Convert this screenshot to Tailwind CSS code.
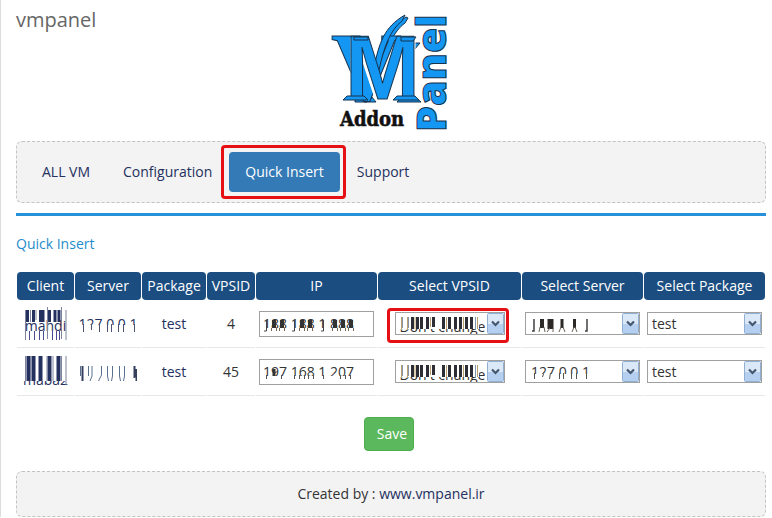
<!DOCTYPE html>
<html lang="en">
<head>
    <meta charset="UTF-8">
    <meta name="viewport" content="width=device-width, initial-scale=1.0">
    <title>vmpanel</title>
    <script src="https://cdn.jsdelivr.net/npm/@tailwindcss/browser@4"></script>
</head>
<body class="bg-white font-['Open_Sans',sans-serif] text-sm text-[#333333]">
    <!-- Shared shapes: drop-down arrow and the masks over private values -->
    <svg class="hidden">
        <defs>
            <linearGradient id="arrowFill" x1="0" y1="0" x2="0" y2="1">
                <stop offset="0" stop-color="#e6f0fb"/>
                <stop offset="1" stop-color="#a9c9ee"/>
            </linearGradient>
        </defs>
        <symbol id="arrow" viewBox="0 0 17 21">
            <rect x=".5" y=".5" width="16" height="20" rx="1" fill="#dbe8f8" stroke="#8fb0d3"/>
            <path d="M1 11h15v9H1z" fill="#b5cff0"/>
            <path d="M5 8.500l3.500 3.500 3.500-3.500" fill="none" stroke="#43566e" stroke-width="2.200"/>
        </symbol>
        <symbol id="maskVps" viewBox="0 0 110 23">
            <path d="M3 2h81v15H3z" fill="#fff"/>
            <path d="M6.500 5v13M12.500 5v13" stroke="#b9a06c"/>
            <path d="M7.500 5v11M13.500 5v11M80.500 5v13" stroke="#8395ac"/>
            <path d="M17.500 5v12M22.500 5v12M26.500 5v12M32.500 5v12M38.500 5v10M48.500 5v12M54.500 5v12M60.500 5v12M65.500 5v12M71.500 5v12M76.500 5v12" stroke="#2d2e35" stroke-width="3"/>
            <path d="M20 5v12M35.500 5v10M51.500 5v12M68.500 5v12M82.500 5v12" stroke="#b9a06c"/>
        </symbol>
    </svg>

    <div class="border-l border-[#dddddd] pl-[15px] pr-1.5">
        <header class="grid grid-cols-[1fr_auto_1fr] h-[141px]">
            <h1 class="text-xl leading-10 text-[#666666]">vmpanel</h1>
            <svg class="w-[120px] h-[141px]" viewBox="0 0 120 141" role="img" aria-label="VM Addon Panel">
                <g fill="#1496f3" stroke="#16324c" stroke-width="1">
                    <!-- drop shadows of the monogram -->
                    <path d="M47 66C53 43 57 29 75 17l2 1-3 5C62 32 57 46 51 70zM15 44l21 58h-3zM83 43h6l-6 7v46l7 6H66l4-4h9zM24 102h21l-5-6v3H24z"/>
                    <text x="0" y="100" font-family="Liberation Serif, serif" font-weight="bold" font-size="98">V</text>
                    <path d="M43 68C48 43 53 27 74 15l-3 6C59 30 53 47 48 70z"/>
                    <g font-family="Liberation Sans, sans-serif" font-weight="bold" font-size="90" stroke-linejoin="round">
                        <path d="M22 38v60M34 62l12 36 14-36M82 38v60" fill="none" stroke="#fff" stroke-width="5"/>
                        <text x="14" y="99">M</text>
                        <path d="M16 96l-4 4h25l-4-4zM66 96l-4 4h26l-4-4zM23 37h14v3H23zM70 37h15l-3 4H70z"/>
                    </g>
                    <text transform="translate(115 132) rotate(-90)" font-family="Open Sans, sans-serif" font-weight="800" font-size="41">Panel</text>
                </g>
                <text x="9" y="126" font-family="DejaVu Serif Condensed, DejaVu Serif, serif" font-weight="bold" font-size="20" fill="#111" stroke="#111" stroke-width=".5">Addon</text>
            </svg>
        </header>

        <nav class="flex gap-px items-center rounded-md border border-dashed border-[#c3c3c3] bg-[#f3f3f3] px-[9px] py-2.5">
            <a href="#" class="px-4 py-2.5 leading-5 text-[#24305e]">ALL VM</a>
            <a href="#" class="px-4 py-2.5 leading-5 text-[#24305e]">Configuration</a>
            <div class="relative">
                <a href="#" class="block rounded bg-[#337ab7] px-4 py-2.5 leading-5 text-white">Quick Insert</a>
                <span class="absolute -left-2 -right-1.5 -top-[7px] -bottom-[7px] rounded border-3 border-[#e60f13] pointer-events-none"></span>
            </div>
            <a href="#" class="px-4 py-2.5 leading-5 text-[#24305e]">Support</a>
        </nav>

        <div class="mt-2.5 h-[3px] bg-[#2690d9]"></div>
        <h2 class="mt-4.5 leading-5 text-[#1f8dcb]">Quick Insert</h2>

        <form>
            <table class="mt-4.5 w-full table-fixed border-separate border-spacing-x-px border-spacing-y-0 text-center">
                <colgroup>
                    <col class="w-[57px]">
                    <col class="w-[66px]">
                    <col class="w-[64px]">
                    <col class="w-[48px]">
                    <col class="w-[121px]">
                    <col class="w-[143px]">
                    <col class="w-[121px]">
                    <col class="w-[121px]">
                </colgroup>
                <thead>
                    <tr class="h-7 bg-white text-white">
                        <th class="rounded bg-[#1b4d80] font-medium">Client</th>
                        <th class="rounded bg-[#1b4d80] font-medium">Server</th>
                        <th class="rounded bg-[#1b4d80] font-medium">Package</th>
                        <th class="rounded bg-[#1b4d80] font-medium">VPSID</th>
                        <th class="rounded bg-[#1b4d80] font-medium">IP</th>
                        <th class="rounded bg-[#1b4d80] font-medium">Select VPSID</th>
                        <th class="rounded bg-[#1b4d80] font-medium">Select Server</th>
                        <th class="rounded bg-[#1b4d80] font-medium">Select Package</th>
                    </tr>
                </thead>
                <tbody>
                    <tr class="h-12">
                        <td class="border-b border-[#e7e7e7]">
                            <a href="#" class="relative inline-block h-9 pt-2.5 align-middle leading-5 text-[#24305e]">mahdi
                                <svg class="absolute left-0 top-0 w-[42px] h-9" viewBox="0 0 42 36">
                                    <path d="M0 4h42v10H0z" fill="#fff"/>
                                    <path d="M2.500 4v12M8.500 4v12M15.500 4v12M18 4v12M24.500 4v12M30 4v12M34 4v12" stroke="#24305e" stroke-width="3"/>
                                    <path d="M.5 4v30M5.500 4v12M11 4v10M22.500 1v32M36.500 1v32M41 4v30" stroke="#7f849e"/>
                                    <path d="M4.500 25v9M9.500 25v9M14.500 25v9M18.500 25v9M27.500 25v9M31.500 25v9M34.500 25v9" stroke="#4b4d91"/>
                                </svg>
                            </a>
                        </td>
                        <td class="border-b border-[#e7e7e7]">
                            <a href="#" class="relative inline-block h-6 pt-0.5 align-middle leading-5 text-[#24305e]">127 0 0 1
                                <svg class="absolute left-0 top-0 w-[58px] h-6" viewBox="0 0 58 24">
                                    <path d="M0 13h58v7H0z" fill="#fff"/>
                                    <path d="M4.500 12v8M12.500 12v6M20.500 12v8M28.500 12v8M32.500 12v8M39.500 12v8M44.500 12v8M55.500 12v8" stroke="#4b5275"/>
                                </svg>
                            </a>
                        </td>
                        <td class="border-b border-[#e7e7e7] text-[#24305e]">test</td>
                        <td class="border-b border-[#e7e7e7]">4</td>
                        <td class="border-b border-[#e7e7e7]">
                            <div class="relative mx-auto w-[115px]">
                                <input type="text" aria-label="IP" value="188 188 1 888" class="block h-[26px] w-full border border-[#a0a0a0] bg-white px-[3px]">
                                <svg class="absolute left-0 top-0 w-[115px] h-[26px]" viewBox="0 0 115 26">
                                    <path d="M3 3h92v5H3zM3 17h92v4H3z" fill="#fff"/>
                                    <path d="M7.500 9v11H5M35.500 9v11H33M64.500 9v11H62" fill="none" stroke="#444"/>
                                    <path d="M15 9v8M23 9v8M43 9v8M51 9v8M76 9v8M84 9v8M92 9v8" stroke="#333" stroke-width="4"/>
                                    <path d="M12.500 17v3M17.500 17v3M20.500 17v3M25.500 17v3M40.500 17v3M45.500 17v3M48.500 17v3M53.500 17v3M73.500 17v3M78.500 17v3M81.500 17v3M86.500 17v3M89.500 17v3M94.500 17v3" stroke="#76684b"/>
                                </svg>
                            </div>
                        </td>
                        <td class="border-b border-[#e7e7e7]">
                            <div class="relative mx-auto w-[110px]">
                                <select aria-label="Select VPSID" class="block h-[23px] w-full appearance-none border border-[#a0a0a0] bg-white pl-1 pt-1.5 leading-4">
                                    <option>Don't change</option>
                                </select>
                                <svg class="pointer-events-none absolute inset-0 w-[110px] h-[23px]"><use href="#maskVps"/></svg>
                                <svg class="pointer-events-none absolute right-px top-px w-[17px] h-[21px]"><use href="#arrow"/></svg>
                                <span class="absolute -left-2 -right-1 -top-1 -bottom-2 rounded border-3 border-[#e60f13] pointer-events-none"></span>
                            </div>
                        </td>
                        <td class="border-b border-[#e7e7e7]">
                            <div class="relative mx-auto w-[115px]">
                                <select aria-label="Select Server" class="block h-[23px] w-full appearance-none border border-[#a0a0a0] bg-white pl-[5px] leading-4">
                                    <option>127 0 0 1</option>
                                </select>
                                <svg class="pointer-events-none absolute left-0 top-0 w-[90px] h-[23px]" viewBox="0 0 90 23">
                                    <path d="M4 3h66v19H4z" fill="#fff"/>
                                    <path d="M9 7v12h-2M62 7v12h-2" fill="none" stroke="#41413f" stroke-width="1.500"/>
                                    <path d="M17 7v9" stroke="#2d2927" stroke-width="4"/>
                                    <path d="M25.500 7v10" stroke="#2d2927" stroke-width="6"/>
                                    <path d="M37 7v9M49.500 7v9" stroke="#2d2927" stroke-width="3"/>
                                    <path d="M15 15l-1 5M19 15l1 5M25 16l-3 4M28 16v4M36 15l-2 5M38 15l2 5M49 15l-2 5M50 15l2 5" stroke="#6a6257"/>
                                </svg>
                                <svg class="pointer-events-none absolute right-px top-px w-[17px] h-[21px]"><use href="#arrow"/></svg>
                            </div>
                        </td>
                        <td class="border-b border-[#e7e7e7]">
                            <div class="relative mx-auto w-[115px]">
                                <select aria-label="Select Package" class="block h-[23px] w-full appearance-none border border-[#a0a0a0] bg-white pl-1 leading-4">
                                    <option>test</option>
                                </select>
                                <svg class="pointer-events-none absolute right-px top-px w-[17px] h-[21px]"><use href="#arrow"/></svg>
                            </div>
                        </td>
                    </tr>
                    <tr class="h-12">
                        <td class="border-b border-[#e7e7e7]">
                            <a href="#" class="relative inline-block h-9 pt-4 align-middle leading-5 text-[#24305e]">maba2
                                <svg class="absolute left-0 top-0 w-[45px] h-9" viewBox="0 0 45 36">
                                    <path d="M0 2h45v25H0z" fill="#fff"/>
                                    <path d="M5.500 2v25M10.500 2v25M17.500 2v25M26.500 2v25M35.500 2v25" stroke="#24305e" stroke-width="4"/>
                                    <path d="M2.500 2v25M7.500 2v25M24 2v25M30 2v25M38.500 2v25M43 2v29" stroke="#7f849e"/>
                                </svg>
                            </a>
                        </td>
                        <td class="border-b border-[#e7e7e7]">
                            <a href="#" class="relative inline-block h-6 pt-0.5 align-middle leading-5 text-[#24305e]">197 0 0 1
                                <svg class="absolute left-0 top-0 w-[58px] h-6" viewBox="0 0 58 24">
                                    <path d="M0 2h58v19H0z" fill="#fff"/>
                                    <path d="M1.500 6v10M9.500 6v10M13 6v10l-2 5M22.500 6v9l-3 6M28.500 6v10l1 5M33.500 6v10l-1 5M40.500 6v10l1 5M45.500 6v10l-1 5" fill="none" stroke="#59708f"/>
                                    <path d="M3.500 6v15M55.500 6v12M57.500 9v12" stroke="#34405e" stroke-width="2"/>
                                </svg>
                            </a>
                        </td>
                        <td class="border-b border-[#e7e7e7] text-[#24305e]">test</td>
                        <td class="border-b border-[#e7e7e7]">45</td>
                        <td class="border-b border-[#e7e7e7]">
                            <div class="relative mx-auto w-[115px]">
                                <input type="text" aria-label="IP" value="197 168 1 207" class="block h-[26px] w-full border border-[#a0a0a0] bg-white px-[3px]">
                                <svg class="absolute left-0 top-0 w-[115px] h-[26px]" viewBox="0 0 115 26">
                                    <path d="M3 17h92v3H3z" fill="#fff"/>
                                    <path d="M15 10v7" stroke="#333" stroke-width="3"/>
                                    <path d="M7.500 16v4M22.500 16v4M35.500 16v4M40.500 16v4M45.500 16v4M49.500 16v4M54.500 16v4M64.500 16v4M81.500 16v4M86.500 16v4M91.500 16v4" stroke="#555"/>
                                </svg>
                            </div>
                        </td>
                        <td class="border-b border-[#e7e7e7]">
                            <div class="relative mx-auto w-[110px]">
                                <select aria-label="Select VPSID" class="block h-[23px] w-full appearance-none border border-[#a0a0a0] bg-white pl-1 pt-1.5 leading-4">
                                    <option>Don't change</option>
                                </select>
                                <svg class="pointer-events-none absolute inset-0 w-[110px] h-[23px]"><use href="#maskVps"/></svg>
                                <svg class="pointer-events-none absolute right-px top-px w-[17px] h-[21px]"><use href="#arrow"/></svg>
                            </div>
                        </td>
                        <td class="border-b border-[#e7e7e7]">
                            <div class="relative mx-auto w-[115px]">
                                <select aria-label="Select Server" class="block h-[23px] w-full appearance-none border border-[#a0a0a0] bg-white pl-[5px] leading-4">
                                    <option>127 0 0 1</option>
                                </select>
                                <svg class="pointer-events-none absolute left-0 top-0 w-[90px] h-[23px]" viewBox="0 0 90 23">
                                    <path d="M4 14h66v8H4z" fill="#fff"/>
                                    <path d="M9.500 13v6M18.500 14l-1 3M25.500 13l-1 6M34.500 13v6M38.500 13v6M46.500 13v6M51.500 13v6M61.500 13v6" stroke="#56524c"/>
                                </svg>
                                <svg class="pointer-events-none absolute right-px top-px w-[17px] h-[21px]"><use href="#arrow"/></svg>
                            </div>
                        </td>
                        <td class="border-b border-[#e7e7e7]">
                            <div class="relative mx-auto w-[115px]">
                                <select aria-label="Select Package" class="block h-[23px] w-full appearance-none border border-[#a0a0a0] bg-white pl-1 leading-4">
                                    <option>test</option>
                                </select>
                                <svg class="pointer-events-none absolute right-px top-px w-[17px] h-[21px]"><use href="#arrow"/></svg>
                            </div>
                        </td>
                    </tr>
                </tbody>
            </table>

            <div class="mt-[21px] flex justify-center pr-1">
                <button type="submit" class="rounded border border-[#4cae4c] bg-[#5cb85c] py-1.5 pl-3 pr-1.5 leading-5 text-white">Save</button>
            </div>
        </form>

        <footer class="mt-5 rounded-md border border-dashed border-[#c3c3c3] bg-[#f3f3f3] py-3 text-center leading-5">
            Created by : <a href="#" class="text-[#24305e]">www.vmpanel.ir</a>
        </footer>
    </div>
</body>
</html>
